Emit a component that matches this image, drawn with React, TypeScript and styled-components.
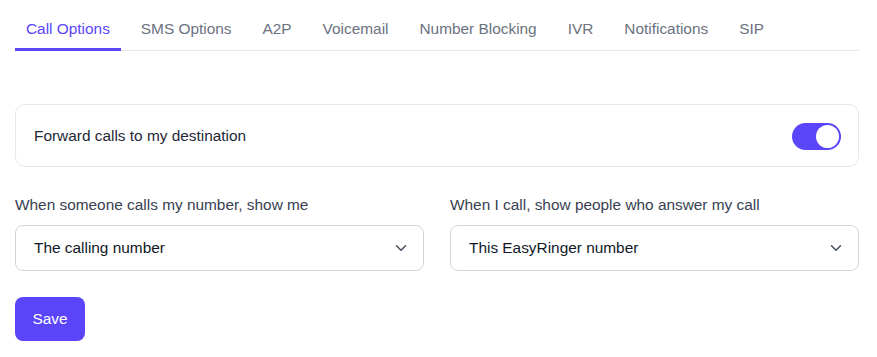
import React, { useState } from "react";
import styled, { createGlobalStyle } from "styled-components";

const GlobalStyle = createGlobalStyle`
  html, body {
    margin: 0;
    padding: 0;
    background: #ffffff;
  }
  body {
    font-family: "Liberation Sans", Arial, sans-serif;
    -webkit-font-smoothing: antialiased;
  }
  * {
    box-sizing: border-box;
  }
`;

const tabs = [
  "Call Options",
  "SMS Options",
  "A2P",
  "Voicemail",
  "Number Blocking",
  "IVR",
  "Notifications",
  "SIP",
];

function Chevron() {
  return (
    <svg width="12" height="8" viewBox="0 0 12 8" fill="none">
      <path
        d="M1.5 1.75L6 6.25L10.5 1.75"
        stroke="#4b5563"
        strokeWidth="1.6"
        strokeLinecap="round"
        strokeLinejoin="round"
      />
    </svg>
  );
}

function App() {
  const [active, setActive] = useState(0);
  const [forward, setForward] = useState(true);

  return (
    <Page>
      <GlobalStyle />
      <TabList>
        {tabs.map((t, i) => (
          <Tab key={t} $active={i === active} onClick={() => setActive(i)}>
            {t}
          </Tab>
        ))}
      </TabList>

      <Card>
        <CardText>Forward calls to my destination</CardText>
        <Toggle $on={forward} onClick={() => setForward(!forward)}>
          <Knob $on={forward} />
        </Toggle>
      </Card>

      <Fields>
        <Field>
          <Label>When someone calls my number, show me</Label>
          <Select>
            <span>The calling number</span>
            <Chevron />
          </Select>
        </Field>
        <Field>
          <Label>When I call, show people who answer my call</Label>
          <Select>
            <span>This EasyRinger number</span>
            <Chevron />
          </Select>
        </Field>
      </Fields>

      <SaveButton>Save</SaveButton>
    </Page>
  );
}

export default App;

const Page = styled.div`
  width: 844px;
  margin-left: 15px;
  display: flex;
  flex-direction: column;
  font-size: 15.4px;
`;

const TabList = styled.nav`
  display: flex;
  gap: 9px;
  border-bottom: 1px solid #e5e7eb;
`;

const Tab = styled.button<{ $active: boolean }>`
  background: none;
  border: none;
  border-bottom: 3px solid ${(p) => (p.$active ? "#5a45fb" : "transparent")};
  margin-bottom: -1px;
  padding: 19px 11px 9px;
  font-family: inherit;
  font-size: 15.4px;
  line-height: 20px;
  color: ${(p) => (p.$active ? "#5a45fb" : "#6b7280")};
  cursor: pointer;
`;

const Card = styled.div`
  margin-top: 53px;
  height: 63px;
  border: 1px solid #e5e7eb;
  border-radius: 10px;
  padding: 1px 17px 0 18px;
  display: flex;
  align-items: center;
  justify-content: space-between;
`;

const CardText = styled.span`
  color: #1f2937;
`;

const Toggle = styled.button<{ $on: boolean }>`
  width: 49px;
  height: 27px;
  border-radius: 14px;
  border: none;
  padding: 2px;
  background: ${(p) => (p.$on ? "#5a45fb" : "#d1d5db")};
  display: flex;
  justify-content: ${(p) => (p.$on ? "flex-end" : "flex-start")};
  cursor: pointer;
`;

const Knob = styled.span<{ $on: boolean }>`
  width: 23px;
  height: 23px;
  border-radius: 50%;
  background: #ffffff;
`;

const Fields = styled.div`
  margin-top: 28px;
  display: grid;
  grid-template-columns: 1fr 1fr;
  gap: 26px;
`;

const Field = styled.div`
  display: flex;
  flex-direction: column;
`;

const Label = styled.label`
  line-height: 20px;
  color: #374151;
  margin-bottom: 10px;
`;

const Select = styled.div`
  height: 46px;
  border: 1px solid #d1d5db;
  border-radius: 8px;
  padding: 0 16px 0 18px;
  display: flex;
  align-items: center;
  justify-content: space-between;
  color: #111827;
`;

const SaveButton = styled.button`
  margin-top: 26px;
  align-self: flex-start;
  width: 70px;
  height: 44px;
  border: none;
  border-radius: 8px;
  background: #5a45fb;
  color: #ffffff;
  font-family: inherit;
  font-size: 15.4px;
  cursor: pointer;
`;
